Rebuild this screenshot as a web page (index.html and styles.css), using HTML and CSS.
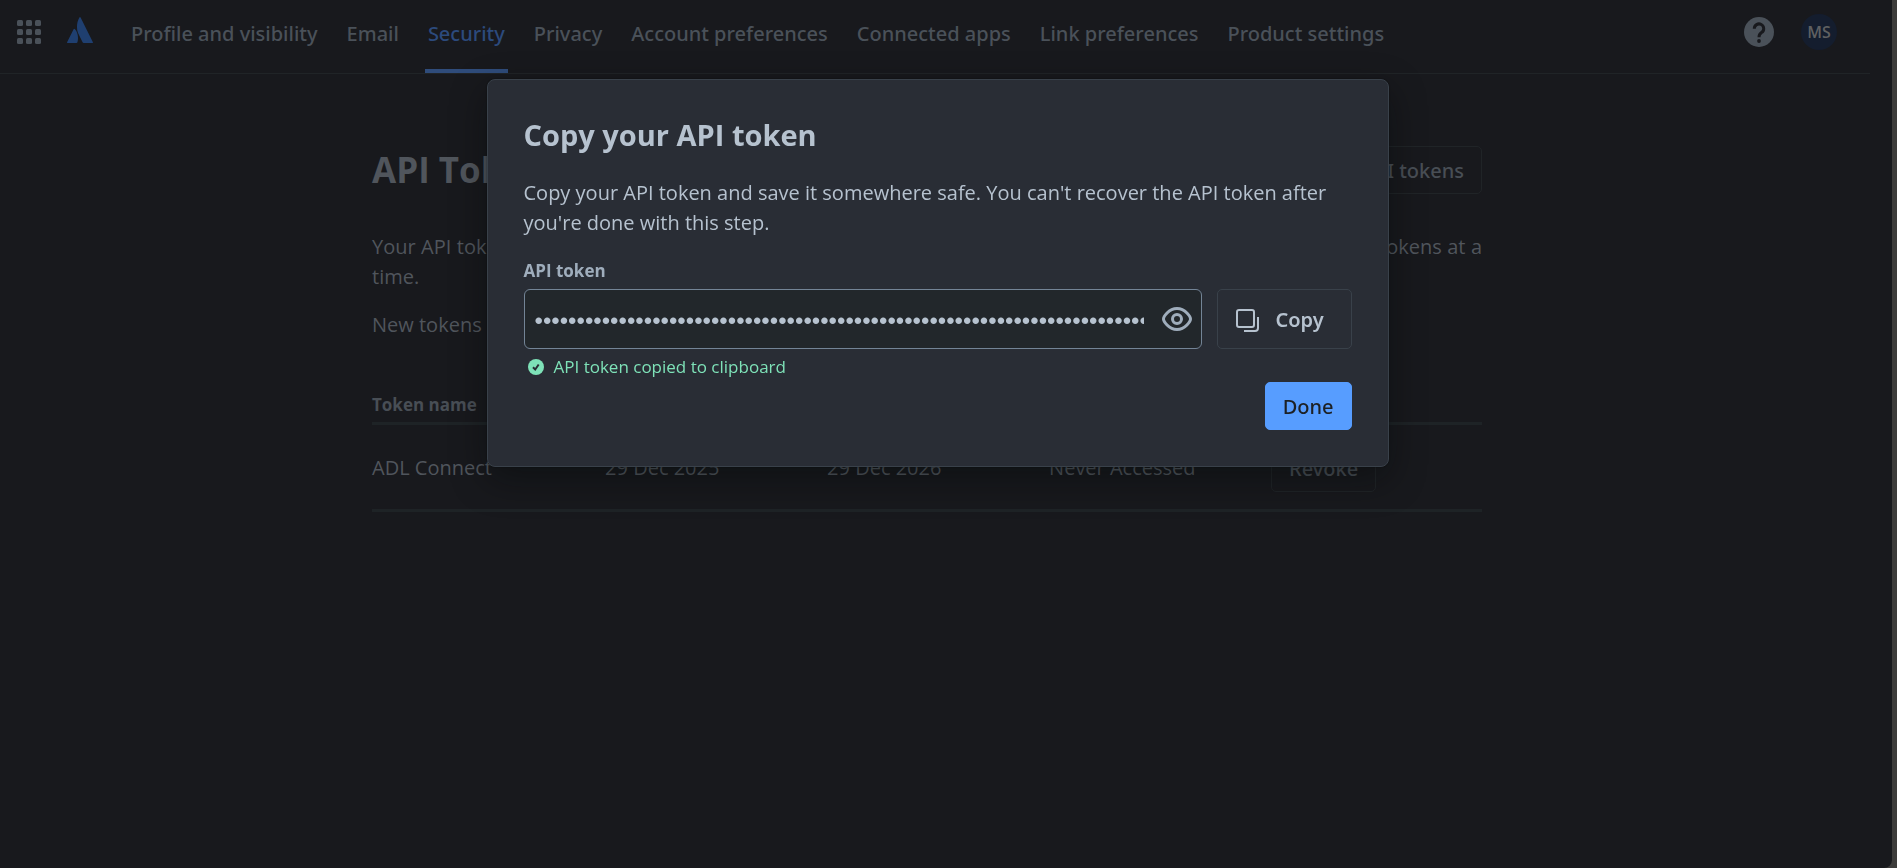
FILE: index.html
```html
<!DOCTYPE html>
<html lang="en">
<head>
<meta charset="utf-8">
<title>API Tokens</title>
<link rel="stylesheet" href="styles.css">
</head>
<body>
<div class="page">
  <header class="topbar">
    <button class="icon-button" aria-label="Switch apps">
      <svg width="24" height="24" viewBox="0 0 24 24" fill="currentColor"><rect width="6" height="6" rx="1.5"/><rect x="9" width="6" height="6" rx="1.5"/><rect x="18" width="6" height="6" rx="1.5"/><rect y="9" width="6" height="6" rx="1.5"/><rect x="9" y="9" width="6" height="6" rx="1.5"/><rect x="18" y="9" width="6" height="6" rx="1.5"/><rect y="18" width="6" height="6" rx="1.5"/><rect x="9" y="18" width="6" height="6" rx="1.5"/><rect x="18" y="18" width="6" height="6" rx="1.5"/></svg>
    </button>
    <a class="logo" href="#" aria-label="Home">
      <svg width="26" height="26" viewBox="0 0 26 26" fill="currentColor"><path d="M6.600 12.200Q7.300 11.200 8 12.200C10.800 15.400 11.700 20.500 10.500 25.100Q10.300 26 9.400 26H.8Q-.3 26 .2 24.900Z"/><path d="M12.400.6Q13-.4 13.600.6L25.800 24.900Q26.300 26 25.200 26H16.600Q15.900 26 15.600 25.300L10.900 15.800C9.300 11.500 9.700 5 12.400.6Z"/></svg>
    </a>
    <nav class="tabs">
      <a class="tab" href="#">Profile and visibility</a>
      <a class="tab" href="#">Email</a>
      <a class="tab tab-active" href="#" aria-current="page">Security</a>
      <a class="tab" href="#">Privacy</a>
      <a class="tab" href="#">Account preferences</a>
      <a class="tab" href="#">Connected apps</a>
      <a class="tab" href="#">Link preferences</a>
      <a class="tab" href="#">Product settings</a>
    </nav>
    <div class="account">
      <button class="icon-button" aria-label="Help">
        <svg width="30" height="30" viewBox="0 0 30 30"><circle cx="15" cy="15" r="15" fill="currentColor"/><path d="M10.300 11.700A4.700 4.700 0 1 1 17.500 15.600C15.900 16.700 15 17.500 15 20.200" fill="none" stroke="#18191d" stroke-width="3"/><circle cx="15" cy="24" r="1.900" fill="#18191d"/></svg>
      </button>
      <button class="avatar">MS</button>
    </div>
  </header>

  <div class="content-area">
  <main class="content">
    <div class="heading-row">
      <h1 class="page-title">API Tokens</h1>
      <button class="button button-muted">Revoke all API tokens</button>
    </div>
    <p class="intro">Your API tokens need to be treated as securely as any other password. You can only have a maximum of 25 tokens at a time.</p>
    <p class="intro">New tokens may take up to a minute to work after they've been created.</p>
    <table class="tokens">
      <thead>
        <tr><th class="col-name">Token name</th><th>Created</th><th>Expires</th><th>Last accessed</th><th class="col-action">Action</th></tr>
      </thead>
      <tbody>
        <tr><td>ADL Connect</td><td>29 Dec 2025</td><td>29 Dec 2026</td><td>Never Accessed</td><td><button class="button button-muted">Revoke</button></td></tr>
      </tbody>
    </table>
  </main>
  </div>
</div>

<div class="layer">
  <section class="modal" role="dialog" aria-modal="true" aria-labelledby="modal-title">
    <h2 class="modal-title" id="modal-title">Copy your API token</h2>
    <p class="modal-text">Copy your API token and save it somewhere safe. You can't recover the API token after you're done with this step.</p>
    <label class="field-label" for="token">API token</label>
    <div class="field-row">
      <div class="field">
        <input class="field-input" id="token" type="password" readonly value="00000000000000000000000000000000000000000000000000000000000000000000000000000000000000000000000000000000">
        <button class="icon-button reveal" aria-label="Show token">
          <svg width="30" height="24" viewBox="0 0 30 24" fill="none" stroke="currentColor" stroke-width="3"><path d="M1.500 12C1.500 10 6.500 1.500 15 1.500S28.500 10 28.500 12 23.500 22.500 15 22.500 1.500 14 1.500 12Z"/><circle cx="15" cy="12" r="4.500"/></svg>
        </button>
      </div>
      <button class="button button-copy">
        <svg width="24" height="24" viewBox="0 0 24 24" fill="none" stroke="currentColor" stroke-width="2"><rect x="2" y="2" width="17" height="17" rx="2"/><path d="M23 9V20Q23 23 20 23H9"/></svg>
        <span>Copy</span>
      </button>
    </div>
    <p class="success" role="status">
      <svg width="16" height="16" viewBox="0 0 16 16"><circle cx="8" cy="8" r="8" fill="currentColor"/><path d="M5 8.300L7.200 10.500 10.700 5.500" fill="none" stroke="#292d35" stroke-width="2"/></svg>
      API token copied to clipboard
    </p>
    <div class="modal-footer">
      <button class="button button-primary">Done</button>
    </div>
  </section>
</div>
</body>
</html>
```
FILE: styles.css
```css
* { box-sizing: border-box; }

body {
  margin: 0;
  background: #3d3c3b;
  color: #50555c;
  font: 400 20px/30px "Open Sans", "Noto Sans", sans-serif;
}

h1, h2, p { margin: 0; }
a { color: inherit; text-decoration: none; }
button { font: inherit; color: inherit; cursor: pointer; }
svg { display: block; flex: none; }

.page {
  min-height: 100vh;
  margin-right: 5px;
  padding-right: 22px;
  background: #18191d;
  border-bottom-right-radius: 8px;
}

.topbar {
  display: flex;
  height: 74px;
  padding: 0 33px 0 17px;
  border-bottom: 1px solid #202427;
  color: #4a5159;
}

.icon-button { padding: 0; border: 0; background: none; }
.topbar .icon-button, .logo { display: flex; align-items: center; height: 64px; }
.logo { margin: 0 24px 0 26px; height: 60px; color: #1f3f70; }

.tabs { display: flex; gap: 23px; }
.tab {
  display: flex;
  align-items: center;
  padding: 0 3px 6px;
  border-radius: 1px 1px 0 0;
  font-family: "Noto Sans", "Open Sans", sans-serif;
  font-weight: 500;
  white-space: nowrap;
}
.tabs .tab:first-child { margin-left: 11px; }
.tab-active { color: #2c4a7c; box-shadow: inset 0 -4px #2f4c7b; }

.account { display: flex; align-items: center; gap: 27px; height: 64px; margin-left: auto; }
.avatar {
  width: 36px;
  height: 36px;
  padding: 0;
  border: 0;
  border-radius: 50%;
  background: #141d2e;
  color: #5f6061;
  font-size: 16px;
  font-weight: 600;
}

.content-area { padding: 72px 16px 0 0; }
.content {
  width: 1110px;
  max-width: 100%;
  margin: 0 auto;
}
.heading-row { display: flex; justify-content: space-between; margin-bottom: 38px; }
.page-title { font-size: 35px; line-height: 48px; font-weight: 700; }
.intro { margin-bottom: 18px; text-align: justify; }

.button {
  display: inline-flex;
  align-items: center;
  justify-content: center;
  height: 48px;
  padding: 2px 17px 0;
  border: 1px solid #202427;
  border-radius: 5px;
  background: none;
  font-family: "Noto Sans", "Open Sans", sans-serif;
  font-weight: 500;
}
.button-muted { color: #484e55; }

.tokens { width: 100%; margin-top: 53px; border-collapse: collapse; table-layout: fixed; }
.tokens th {
  width: 20%;
  padding: 0 0 5px;
  border-bottom: 3px solid #1e2326;
  color: #484e55;
  font-size: 17px;
  font-weight: 700;
  line-height: 24px;
  text-align: left;
}
.tokens .col-name { width: 21%; }
.tokens .col-action { width: 19%; }
.tokens td { height: 87px; padding: 2px 0 0; border-bottom: 3px solid #1e2326; }

.layer {
  position: fixed;
  inset: 79px 22px auto 0;
  display: flex;
  justify-content: center;
}
.modal {
  width: 902px;
  padding: 36px;
  border: 1px solid #39414a;
  border-radius: 8px;
  background: #292d35;
  box-shadow: 0 12px 36px rgba(3, 8, 8, 0.4), 0 0 2px rgba(3, 4, 4, 0.5);
  color: #b6c2cf;
}
.modal-title { margin-bottom: 24px; font-size: 29px; line-height: 38px; font-weight: 700; }
.modal-text { margin-bottom: 21px; }
.field-label {
  display: block;
  margin-bottom: 6px;
  color: #9fadbc;
  font-size: 17px;
  font-weight: 700;
  line-height: 24px;
}
.field-row { display: flex; gap: 15px; }
.field {
  display: flex;
  flex: 1;
  align-items: center;
  height: 60px;
  padding: 0 9px 0 10px;
  border: 1px solid #738496;
  border-radius: 6px;
  background: #22272b;
}
.field-input {
  flex: 1;
  min-width: 0;
  padding: 4px 0 0;
  border: 0;
  outline: 0;
  background: none;
  color: #b6c2cf;
  font: 400 24px/30px "Liberation Sans", sans-serif;
}
.reveal { margin-left: 18px; color: #9fadbc; }
.button-copy {
  width: 135px;
  height: 60px;
  gap: 17px;
  justify-content: flex-start;
  border-color: #39414a;
  font-weight: 600;
}
.success {
  display: flex;
  align-items: center;
  gap: 10px;
  padding: 6px 4px 0;
  color: #7ee2b8;
  font-size: 17px;
  line-height: 24px;
}
.modal-footer { display: flex; justify-content: flex-end; margin-top: 3px; }
.button-primary { border-color: #579dff; background: #579dff; color: #1d2125; }
```
